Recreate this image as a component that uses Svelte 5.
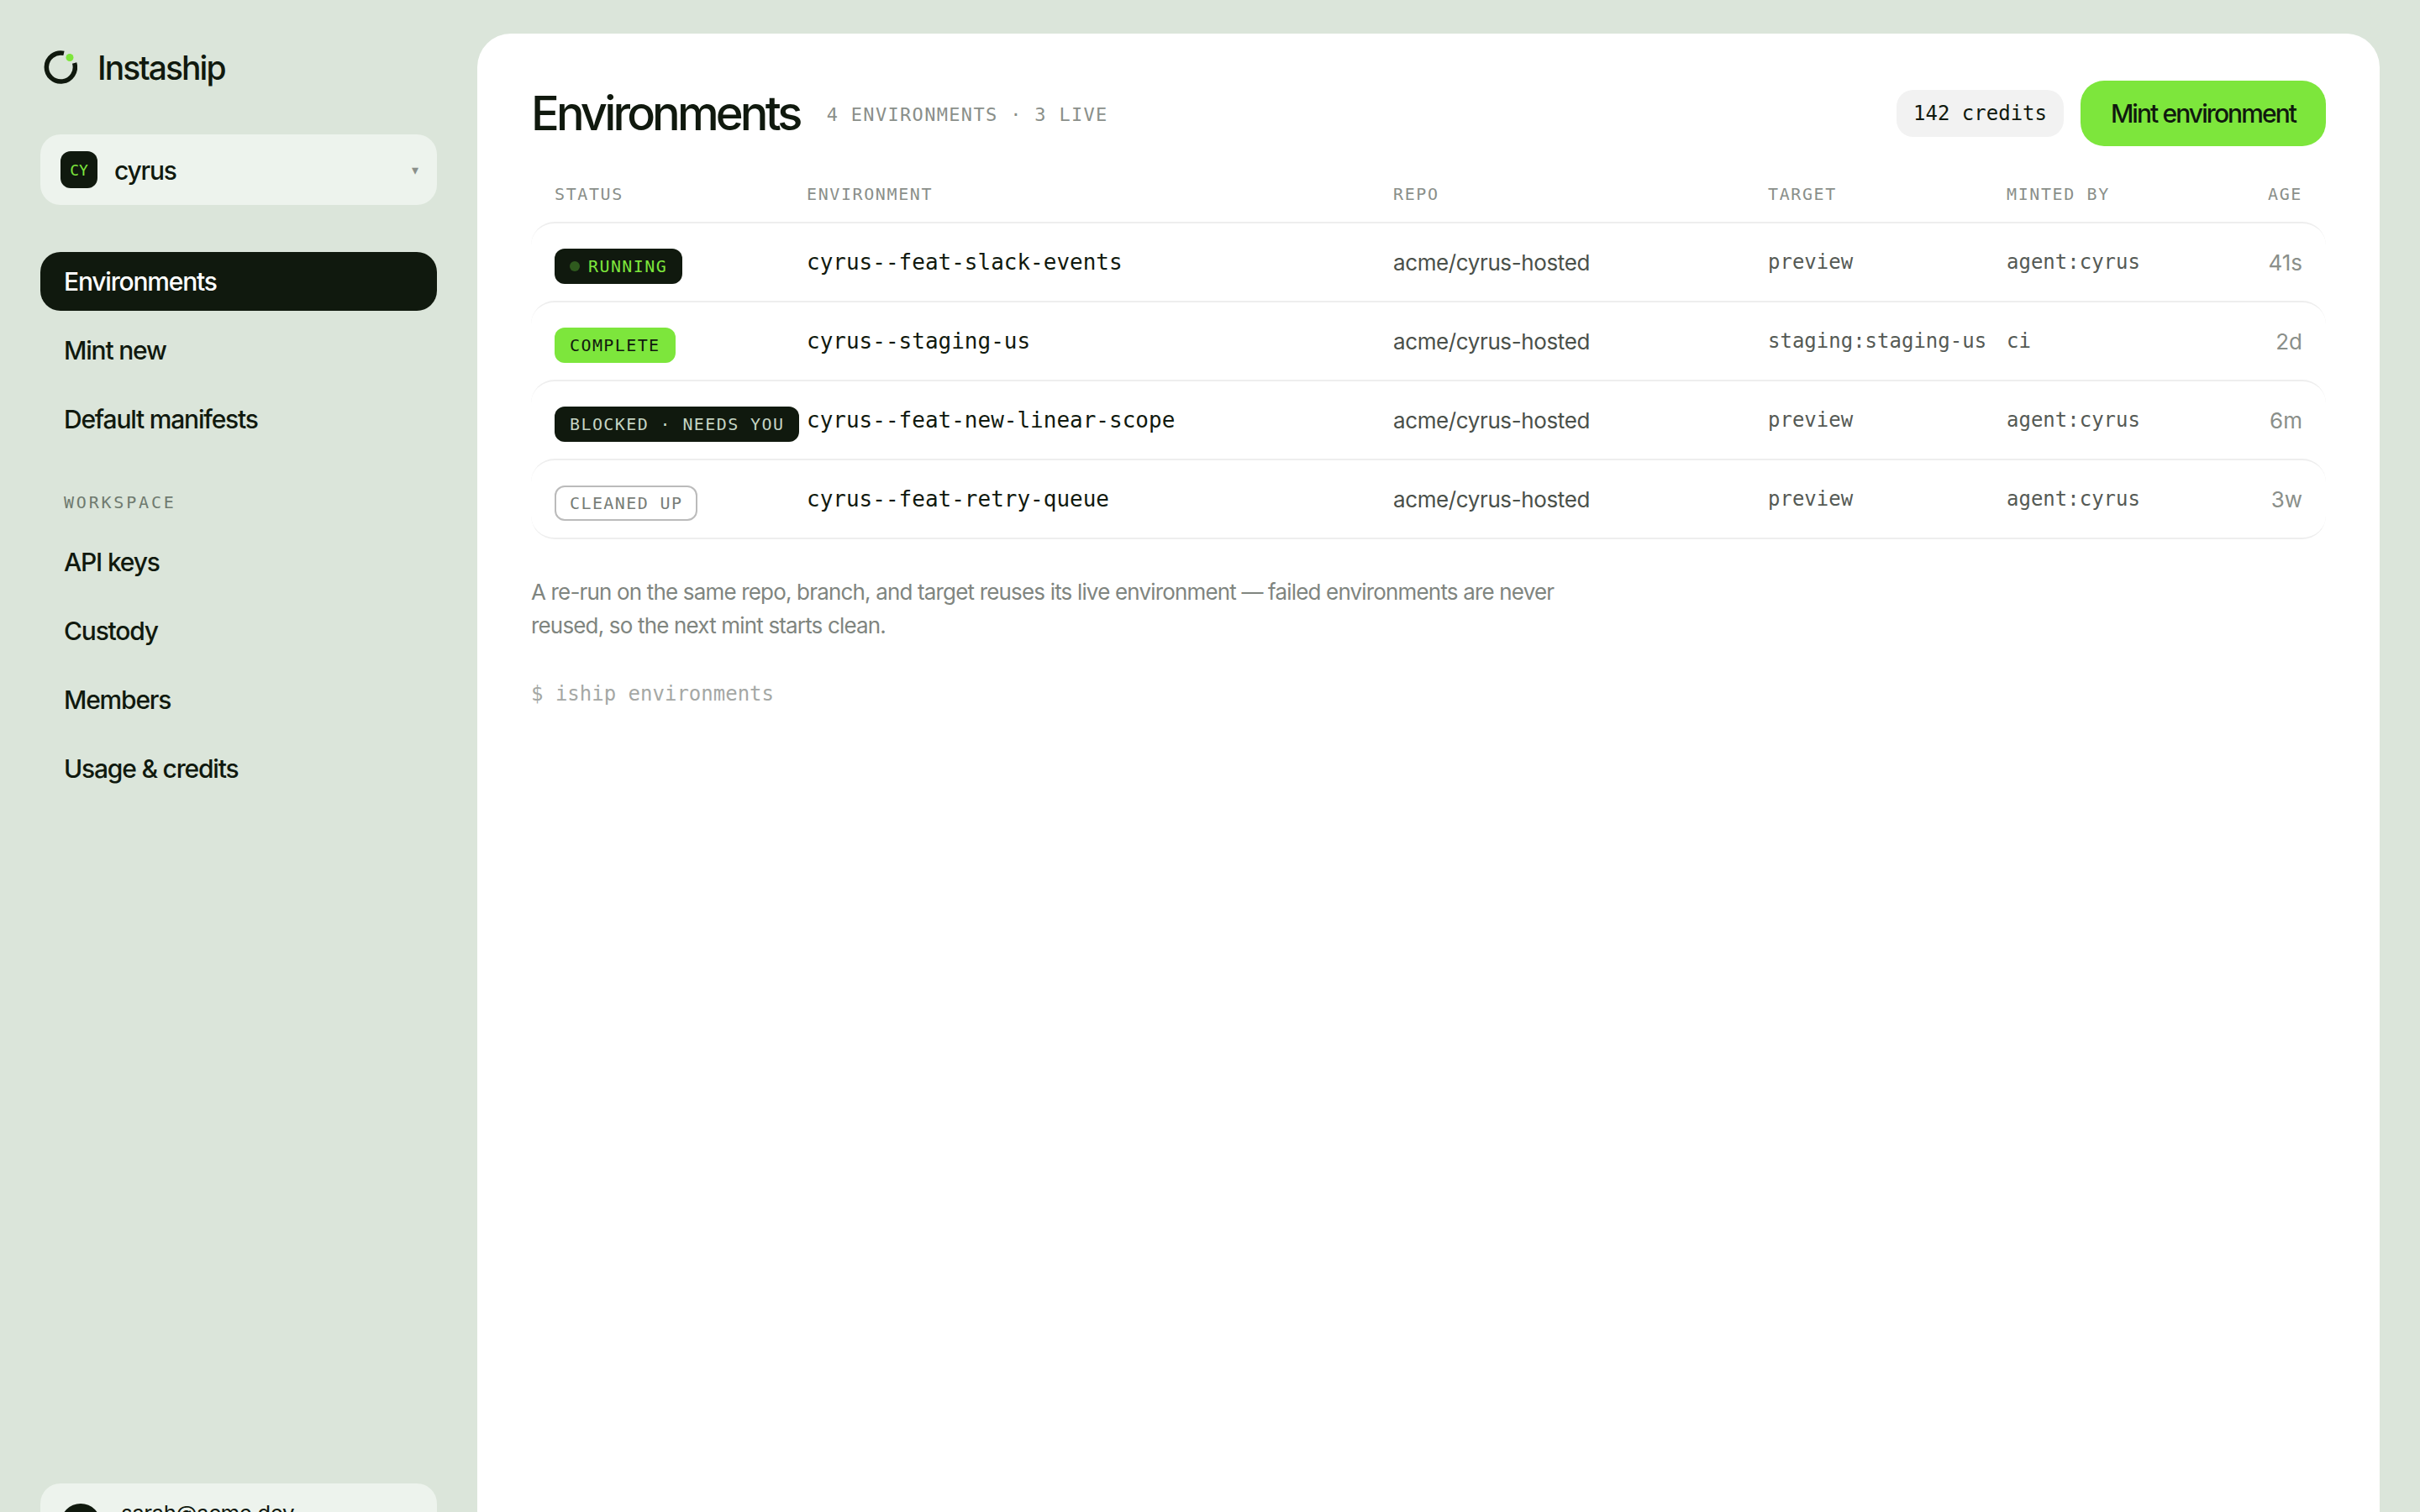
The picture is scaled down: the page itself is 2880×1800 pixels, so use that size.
<script>
  const mainNav = [
    { label: 'Environments', active: true },
    { label: 'Mint new' },
    { label: 'Default manifests' }
  ];
  const workspaceNav = ['API keys', 'Custody', 'Members', 'Usage & credits'];

  const rows = [
    { status: 'RUNNING', kind: 'running', name: 'cyrus--feat-slack-events', target: 'preview', by: 'agent:cyrus', age: '41s' },
    { status: 'COMPLETE', kind: 'complete', name: 'cyrus--staging-us', target: 'staging:staging-us', by: 'ci', age: '2d' },
    { status: 'BLOCKED · NEEDS YOU', kind: 'blocked', name: 'cyrus--feat-new-linear-scope', target: 'preview', by: 'agent:cyrus', age: '6m' },
    { status: 'CLEANED UP', kind: 'cleaned', name: 'cyrus--feat-retry-queue', target: 'preview', by: 'agent:cyrus', age: '3w' }
  ];
</script>

<div class="shell">
  <aside class="sidebar">
    <div class="brand">
      <svg class="logo" viewBox="0 0 40 40" width="40" height="40" fill="none">
        <path d="M24 3.4A17 17 0 1 0 36.6 15" stroke="#10190e" stroke-width="5.5" />
        <circle cx="31" cy="8.5" r="4.5" fill="#7de63c" />
      </svg>
      <span class="brand-name">Instaship</span>
    </div>

    <div class="org">
      <span class="org-badge">CY</span>
      <span class="org-name">cyrus</span>
      <span class="caret">▾</span>
    </div>

    <nav class="nav">
      {#each mainNav as item}
        <div class="nav-item" class:active={item.active}>{item.label}</div>
      {/each}
      <div class="nav-label">WORKSPACE</div>
      {#each workspaceNav as label}
        <div class="nav-item">{label}</div>
      {/each}
    </nav>

    <div class="account">
      <span class="avatar"></span>
      <span class="email">sarah@acme.dev</span>
    </div>
  </aside>

  <main class="panel">
    <header class="head">
      <h1>Environments</h1>
      <span class="meta">4 ENVIRONMENTS · 3 LIVE</span>
      <span class="credits">142 credits</span>
      <button class="mint">Mint environment</button>
    </header>

    <div class="table">
      <div class="row thead">
        <span>STATUS</span>
        <span>ENVIRONMENT</span>
        <span>REPO</span>
        <span>TARGET</span>
        <span>MINTED BY</span>
        <span class="right">AGE</span>
      </div>
      {#each rows as row}
        <div class="row item">
          <div>
            <span class="pill {row.kind}">
              {#if row.kind === 'running'}<i class="dot"></i>{/if}{row.status}
            </span>
          </div>
          <span class="env">{row.name}</span>
          <span class="repo">acme/cyrus-hosted</span>
          <span class="mono">{row.target}</span>
          <span class="mono">{row.by}</span>
          <span class="age right">{row.age}</span>
        </div>
      {/each}
    </div>

    <p class="note">A re-run on the same repo, branch, and target reuses its live environment — failed environments are never reused, so the next mint starts clean.</p>
    <p class="cmd">$ iship environments</p>
  </main>
</div>

<style>
  :global(body) {
    overflow: hidden;
    background: #dbe5da;
  }

  .shell {
    display: grid;
    grid-template-columns: 568px 1fr;
    height: 1894px;
    color: #10190e;
    font-family: Inter, "Liberation Sans", sans-serif;
    background: #dbe5da;
  }

  .sidebar {
    display: flex;
    flex-direction: column;
    padding: 60px 48px 40px;
  }

  .brand {
    display: flex;
    align-items: center;
    gap: 24px;
    height: 40px;
    padding-left: 4px;
  }

  .brand-name {
    font-size: 39px;
    letter-spacing: -0.05em;
    font-weight: 500;
  }

  .org {
    display: flex;
    align-items: center;
    height: 84px;
    margin-top: 60px;
    padding: 0 24px;
    background: #edf3ed;
    border-radius: 24px;
  }

  .org-badge {
    display: flex;
    align-items: center;
    justify-content: center;
    width: 44px;
    height: 44px;
    border-radius: 12px;
    background: #10190e;
    color: #7de63c;
    font: 18px "DejaVu Sans Mono", monospace;
  }

  .org-name {
    margin-left: 20px;
    padding-top: 2px;
    font-size: 30px;
    font-weight: 500;
    letter-spacing: -0.04em;
  }

  .caret {
    margin-left: auto;
    margin-right: -2px;
    color: #8a8f8a;
    font-size: 16px;
  }

  .nav {
    display: flex;
    flex-direction: column;
    gap: 12px;
    margin-top: 56px;
  }

  .nav-item {
    height: 70px;
    padding: 0 28px;
    line-height: 70px;
    border-radius: 24px;
    font-size: 30px;
    font-weight: 500;
    letter-spacing: -0.04em;
  }

  .nav-item.active {
    background: #10190e;
    color: #fff;
  }

  .nav-label {
    margin: 37px 0 9px 28px;
    font: 20px/30px "DejaVu Sans Mono", monospace;
    letter-spacing: 0.14em;
    color: #6f7a6f;
  }

  .account {
    display: flex;
    align-items: flex-start;
    gap: 24px;
    height: 88px;
    margin-top: auto;
    padding: 24px;
    box-sizing: border-box;
    border-radius: 24px;
    background: #edf3ed;
  }

  .avatar {
    flex: none;
    width: 48px;
    height: 48px;
    border-radius: 50%;
    background: #10190e;
  }

  .email {
    font-size: 26px;
    line-height: 24px;
    letter-spacing: -0.02em;
  }

  .panel {
    margin: 40px 48px 0 0;
    padding: 56px 64px;
    background: #fff;
    border-radius: 40px 40px 0 0;
  }

  .head {
    display: flex;
    align-items: center;
    height: 78px;
  }

  h1 {
    margin: 0;
    font-size: 56px;
    font-weight: 500;
    letter-spacing: -0.069em;
  }

  .meta {
    margin-left: 32px;
    padding-top: 2px;
    font: 22px "DejaVu Sans Mono", monospace;
    letter-spacing: 0.06em;
    color: #8a8f8a;
  }

  .credits {
    margin-left: auto;
    padding: 0 20px;
    height: 56px;
    border-radius: 20px;
    background: #f2f2f2;
    font: 24px/56px "DejaVu Sans Mono", monospace;
  }

  .mint {
    width: 292px;
    height: 78px;
    margin-left: 20px;
    padding: 0;
    border: 0;
    border-radius: 28px;
    background: #7de63c;
    color: #10190e;
    font: 500 30px Inter, "Liberation Sans", sans-serif;
    letter-spacing: -0.064em;
  }

  .table {
    margin-top: 10px;
  }

  .row {
    display: grid;
    grid-template-columns: 300px 698px 446px 284px 1fr 60px;
    align-items: center;
    padding: 0 28px;
  }

  .thead {
    height: 80px;
    padding-top: 14px;
    box-sizing: border-box;
    font: 20px "DejaVu Sans Mono", monospace;
    letter-spacing: 0.08em;
    color: #8a8f8a;
  }

  .item {
    height: 94px;
    box-sizing: border-box;
    border-top: 2px solid #eeeeee;
    border-radius: 28px;
  }

  .item:last-child {
    height: 96px;
    border-bottom: 2px solid #eeeeee;
  }

  .right {
    text-align: right;
  }

  .pill {
    display: inline-flex;
    align-items: center;
    box-sizing: border-box;
    height: 42px;
    margin-top: 10px;
    padding: 0 16px;
    border: 2px solid transparent;
    border-radius: 12px;
    font: 20px "DejaVu Sans Mono", monospace;
    letter-spacing: 0.07em;
    white-space: pre;
  }

  .running {
    background: #10190e;
    color: #7de63c;
  }

  .complete {
    background: #7de63c;
    color: #10190e;
  }

  .blocked {
    background: #10190e;
    color: #c5d4c3;
  }

  .cleaned {
    border-color: #bbbbbb;
    color: #777d77;
  }

  .dot {
    width: 12px;
    height: 12px;
    margin-right: 10px;
    border-radius: 50%;
    background: #2f5a1e;
  }

  .env {
    font: 26px "DejaVu Sans Mono", monospace;
  }

  .repo {
    font-size: 26px;
    letter-spacing: -0.015em;
    color: #4a504a;
  }

  .mono {
    font: 24px "DejaVu Sans Mono", monospace;
    color: #555a55;
  }

  .age {
    font-size: 26px;
    color: #8a8f8a;
  }

  .note {
    width: 1290px;
    margin: 43px 0 0;
    font-size: 26px;
    line-height: 40px;
    letter-spacing: -0.032em;
    color: #7f857f;
  }

  .cmd {
    margin: 47px 0 0;
    font: 24px "DejaVu Sans Mono", monospace;
    color: #a5a8a5;
  }
</style>
